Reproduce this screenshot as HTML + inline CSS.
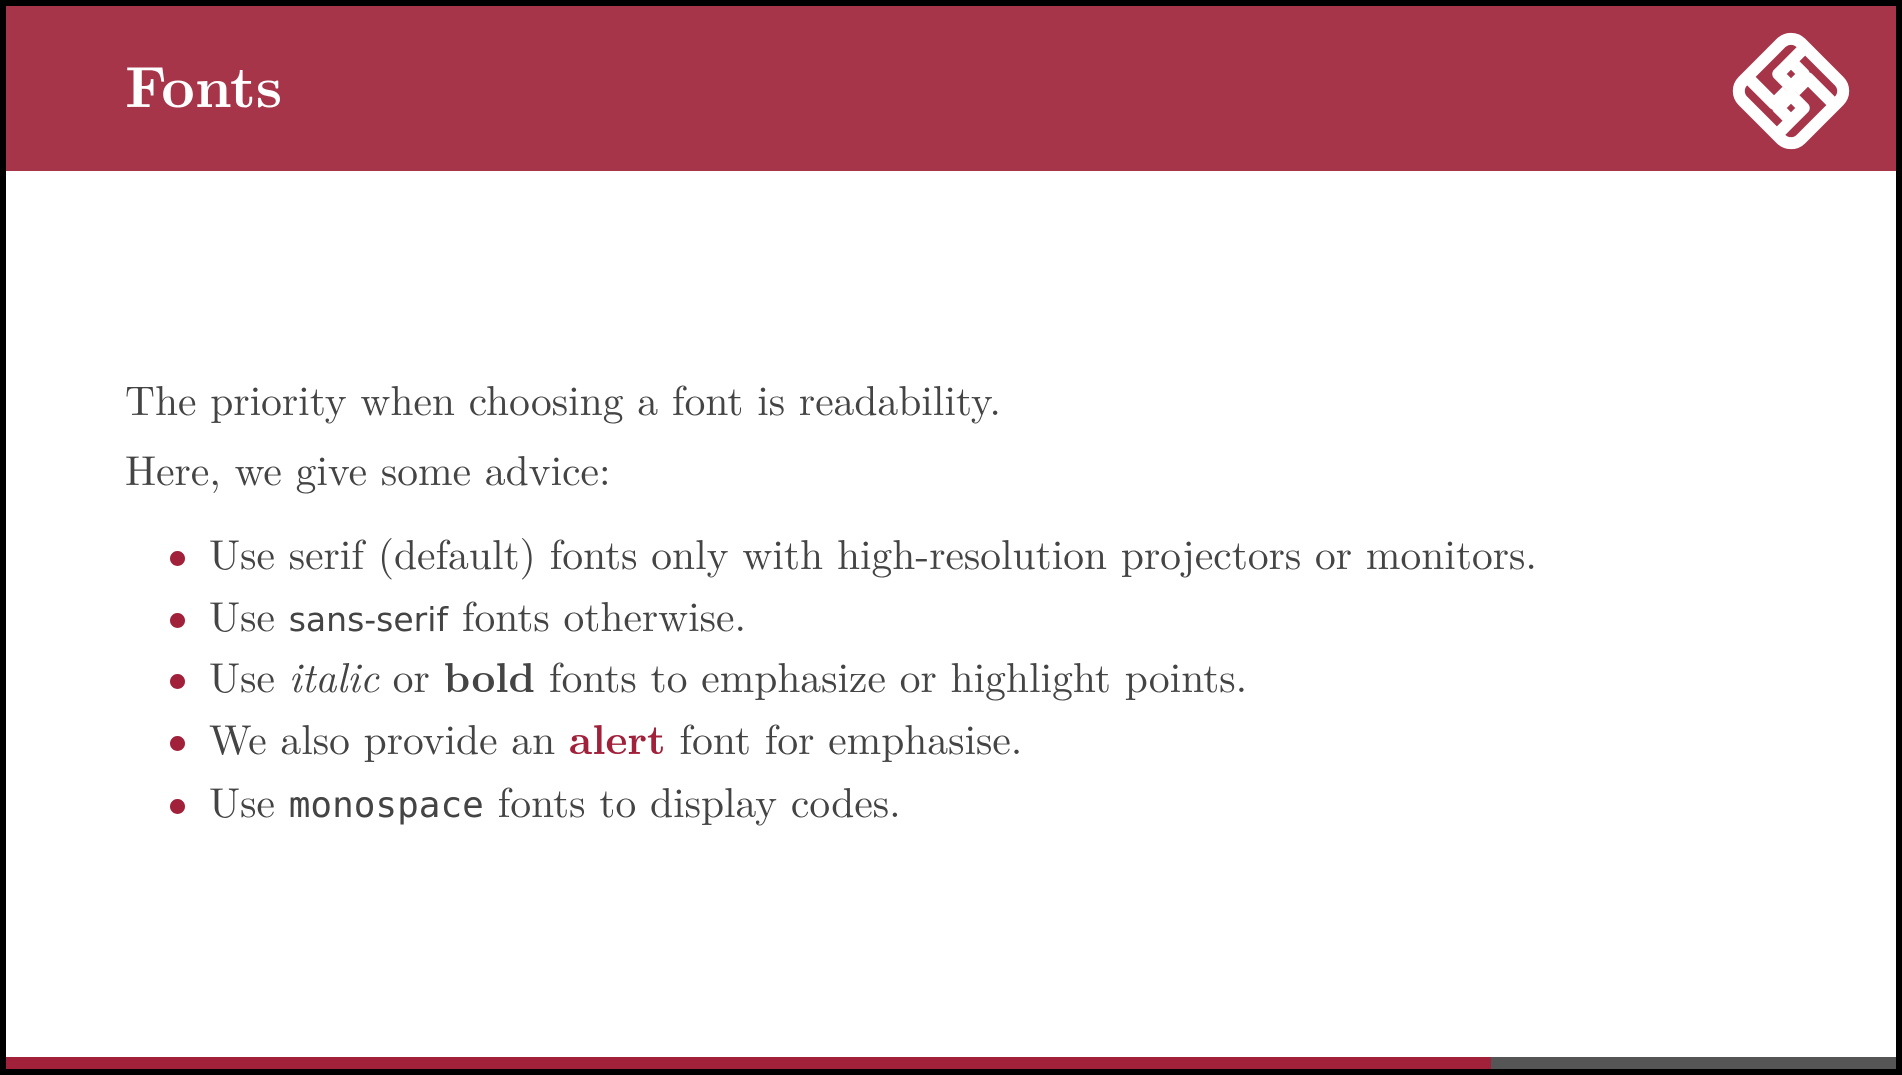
<!DOCTYPE html>
<html><head><style>
html,body{margin:0;padding:0}
body{width:1902px;height:1075px;background:#000;position:relative;overflow:hidden;font-family:"Latin Modern Roman","Liberation Serif",serif;color:#444}
.slide{position:absolute;left:6px;top:6px;width:1890px;height:1063px;background:#fff;overflow:hidden}
.hdr{position:absolute;left:0;top:0;width:100%;height:165px;background:#a6354a}
.title{position:absolute;left:119px;top:49px;font-size:58px;font-weight:bold;color:#fff;line-height:1}
.logo{position:absolute;left:1722px;top:22px}
.t{position:absolute;left:119px;font-size:41.5px;line-height:1;white-space:nowrap}
.b{position:absolute;left:164px;width:15px;height:15px;border-radius:50%;background:#a1213b}
.sans{font-family:"DejaVu Sans","Liberation Sans",sans-serif;font-size:33px}
.mono{font-family:"DejaVu Sans Mono","Liberation Mono",monospace;font-size:36px}
.alert{color:#a1213b;font-weight:bold}
.bar1{position:absolute;left:0;top:1051px;width:1485px;height:12px;background:#a1213b}
.bar2{position:absolute;left:1485px;top:1051px;width:405px;height:12px;background:#555}
</style></head><body>
<div class="slide">
<div class="hdr"></div>
<div class="title">Fonts</div>
<svg class="logo" width="126" height="126" viewBox="0 0 126 126" fill="none" stroke="#fff" stroke-width="12" stroke-linejoin="round">
<g transform="rotate(45 63 63)">
<rect x="22" y="22" width="82" height="82" rx="14"/>
<path d="M42 22 V60 H60 V42 H42"/>
<path d="M84 104 V66 H66 V84 H84"/>
<path d="M22 84 H60 V66"/>
<path d="M104 42 H66 V60"/>
</g>
</svg>
<div class="t" style="top:372px">The priority when choosing a font is readability.</div>
<div class="t" style="top:442px">Here, we give some advice:</div>
<div class="b" style="top:545px"></div>
<div class="t" style="left:203px;top:526px">Use serif (default) fonts only with high-resolution projectors or monitors.</div>
<div class="b" style="top:607px"></div>
<div class="t" style="left:203px;top:588px">Use <span class="sans">sans-serif</span> fonts otherwise.</div>
<div class="b" style="top:668px"></div>
<div class="t" style="left:203px;top:649px">Use <i>italic</i> or <b>bold</b> fonts to emphasize or highlight points.</div>
<div class="b" style="top:730px"></div>
<div class="t" style="left:203px;top:711px">We also provide an <span class="alert">alert</span> font for emphasise.</div>
<div class="b" style="top:793px"></div>
<div class="t" style="left:203px;top:774px">Use <span class="mono">monospace</span> fonts to display codes.</div>
<div class="bar1"></div><div class="bar2"></div>
</div>
</body></html>
